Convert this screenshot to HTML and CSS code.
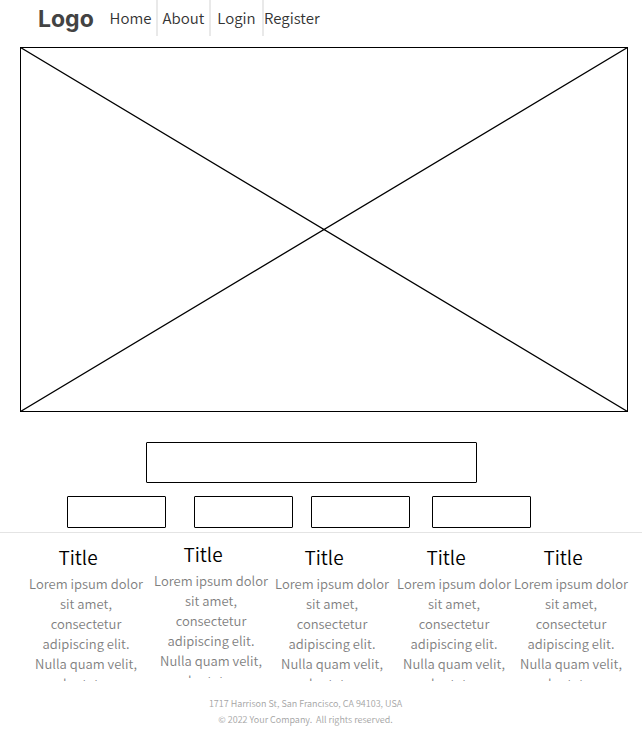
FILE: index.html
```html
<!DOCTYPE html>
<html lang="en">
<head>
<meta charset="utf-8">
<meta name="viewport" content="width=device-width, initial-scale=1">
<title>Logo</title>
<link rel="stylesheet" href="styles.css">
</head>
<body>
<header class="header">
  <a class="logo" href="#">Logo</a>
  <nav class="nav">
    <a class="nav-link" href="#">Home</a>
    <a class="nav-link" href="#">About</a>
    <a class="nav-link" href="#">Login</a>
    <a class="nav-link nav-link-last" href="#">Register</a>
  </nav>
</header>
<main>
  <svg class="hero" viewBox="0 0 608 365" preserveAspectRatio="none" aria-hidden="true">
    <rect x="0.5" y="0.5" width="607" height="364" shape-rendering="crispEdges"/>
    <path d="M0.5 0.5L607.5 364.5M0.5 364.5L607.5 0.5" stroke-width="1.3"/>
  </svg>
  <div class="banner box"></div>
  <div class="tiles">
    <div class="tile box"></div>
    <div class="tile box"></div>
    <div class="tile box"></div>
    <div class="tile box"></div>
  </div>
  <section class="columns">
    <article class="column">
      <h2 class="title">Title</h2>
      <p class="text">Lorem ipsum dolor sit amet, consectetur adipiscing elit. Nulla quam velit, vulputate eu</p>
    </article>
    <article class="column column-raised">
      <h2 class="title">Title</h2>
      <p class="text">Lorem ipsum dolor sit amet, consectetur adipiscing elit. Nulla quam velit, vulputate eu</p>
    </article>
    <article class="column">
      <h2 class="title">Title</h2>
      <p class="text">Lorem ipsum dolor sit amet, consectetur adipiscing elit. Nulla quam velit, vulputate eu</p>
    </article>
    <article class="column">
      <h2 class="title">Title</h2>
      <p class="text">Lorem ipsum dolor sit amet, consectetur adipiscing elit. Nulla quam velit, vulputate eu</p>
    </article>
    <article class="column">
      <h2 class="title">Title</h2>
      <p class="text">Lorem ipsum dolor sit amet, consectetur adipiscing elit. Nulla quam velit, vulputate eu</p>
    </article>
  </section>
</main>
<footer class="footer">
  <p>1717 Harrison St, San Francisco, CA 94103, USA</p>
  <p>© 2022 Your Company.&nbsp; All rights reserved.</p>
</footer>
</body>
</html>
```
FILE: styles.css
```css
* {
  box-sizing: border-box;
}

body {
  margin: 0;
  background: #fff;
  color: #000;
  font-family: "Noto Sans CJK SC DemiLight", "Noto Sans CJK SC", "Noto Sans", sans-serif;
  font-weight: 350;
}

h2,
p {
  margin: 0;
  font-weight: inherit;
}

a {
  color: #333;
  text-decoration: none;
}

.header {
  display: flex;
  height: 36px;
  margin-bottom: 11px;
  padding-left: 38px;
}

.logo {
  width: 67px;
  color: #434343;
  font: 700 23px/38px Inter, sans-serif;
}

.nav {
  display: flex;
}

.nav-link {
  width: 53px;
  border-right: 2px solid #e9e9e9;
  font-size: 15px;
  line-height: 36px;
  text-align: center;
}

.nav-link-last {
  border-right: 0;
}

.hero {
  display: block;
  width: calc(100% - 34px);
  margin-left: 20px;
  aspect-ratio: 608 / 365;
  fill: none;
  stroke: #000;
}

.box {
  border: 1px solid #000;
  border-radius: 1px;
}

.banner {
  width: 331px;
  height: 41px;
  margin: 30px 165px 0 auto;
}

.tiles {
  display: grid;
  grid-template-columns: 127fr 117fr 121fr 99fr;
  margin: 13px 111px 4px 67px;
}

.tile {
  width: 99px;
  height: 32px;
}

.columns {
  display: grid;
  grid-template-columns: 125fr 121fr 122fr 117fr 116fr;
  padding: 11px 13px 0 28px;
  border-top: 1px solid #e4e4e4;
}

.column {
  width: 116px;
  text-align: center;
}

.column-raised {
  margin-top: -3px;
}

.title {
  margin-bottom: 4px;
  padding-right: 16px;
  font-size: 19px;
  line-height: 26px;
}

.text {
  height: 107px;
  overflow: hidden;
  color: #7f7f7f;
  font-size: 13px;
  line-height: 20px;
}

.footer {
  padding: 15px 31px 0 0;
  color: #a4a4a4;
  font-size: 9px;
  font-weight: 400;
  line-height: 16px;
  text-align: center;
}
```
